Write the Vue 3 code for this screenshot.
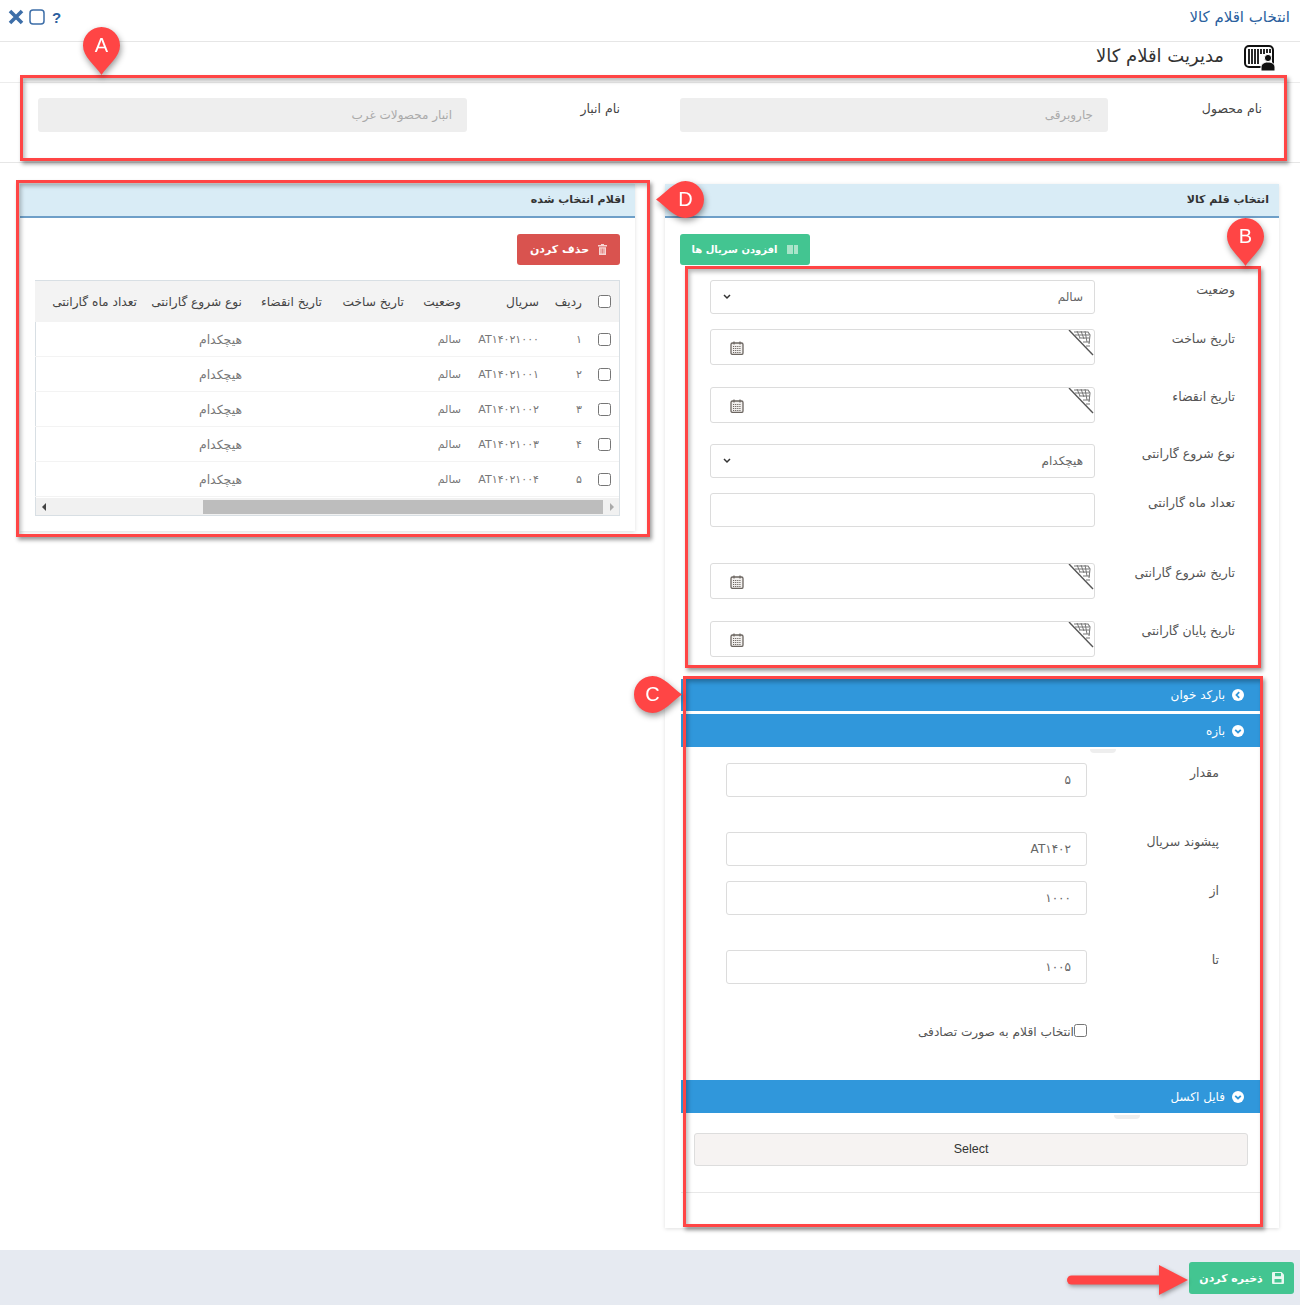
<template>
  <div class="page" dir="rtl">
    <header class="topbar">
      <span class="topbar-title">انتخاب اقلام کالا</span>
      <div class="window-tools" dir="ltr">
        <svg width="16" height="16" viewBox="0 0 16 16"><path d="M2 2l12 12M14 2L2 14" stroke="#3d6ea8" stroke-width="3.6" fill="none"/></svg>
        <svg width="16" height="16" viewBox="0 0 16 16"><rect x="1" y="1" width="14" height="14" rx="3" fill="none" stroke="#3d6ea8" stroke-width="1.5"/></svg>
        <span class="help">?</span>
      </div>
    </header>

    <div class="subbar">
      <svg class="barcode-user" width="32" height="26" viewBox="0 0 32 26">
        <rect x="1" y="1" width="28" height="21" rx="4" fill="none" stroke="#111" stroke-width="2"/>
        <path d="M5 4v15M8 4v15M11 4v15M14 4v15M17 4v5M20 4v5M23 4v4M26 4v4" stroke="#111" stroke-width="1.8"/>
        <circle cx="24" cy="13" r="3.6" fill="#111" stroke="#fff" stroke-width="1"/>
        <path d="M17 26v-4c0-3 3-5 7-5s7 2 7 5v4z" fill="#111" stroke="#fff" stroke-width="1"/>
      </svg>
      <span class="subbar-title">مدیریت اقلام کالا</span>
    </div>

    <section class="info">
      <div v-for="item in infoFields" :key="item.label" class="info-field">
        <label class="info-label">{{ item.label }}</label>
        <input class="info-input" :value="item.value" disabled />
      </div>
    </section>

    <main class="main">
      <section class="panel panel-form">
        <h3 class="panel-head">انتخاب قلم کالا</h3>
        <div class="panel-tools">
          <button class="btn btn-green btn-add">
            <svg width="12" height="9" viewBox="0 0 12 9"><path d="M1 0v9M3 0v9M5 0v9M8 0v9M10 0v9" stroke="#cdeedd" stroke-width="1.5"/></svg>
            افزودن سریال ها
          </button>
        </div>

        <div class="form">
          <div v-for="row in formRows" :key="row.label" class="form-row" :class="'row-' + row.type">
            <label class="form-label">{{ row.label }}</label>
            <div v-if="row.type === 'select'" class="control select">
              <span>{{ row.value }}</span>
              <svg width="8" height="6" viewBox="0 0 8 6"><path d="M1 1l3 3 3-3" fill="none" stroke="#333" stroke-width="1.5"/></svg>
            </div>
            <div v-else-if="row.type === 'date'" class="control date">
              <svg class="date-corner" width="26" height="26" viewBox="0 0 26 26">
                <path d="M1 0h22q2 0 2 2v23z" fill="#fff" stroke="none"/>
                <path d="M1 0L25 25" stroke="#555" stroke-width="1.4"/>
                <path d="M6 2h14l2 3-1 9M7 5h14M11 8h10M15 12h7M18 16h4" fill="none" stroke="#777" stroke-width="1.1"/>
                <path d="M9 1l3 7M13 1l3 8M17 1l2 11" fill="none" stroke="#777" stroke-width="1"/>
              </svg>
              <svg class="date-icon" width="14" height="14" viewBox="0 0 14 14">
                <rect x="1" y="2" width="12" height="11.4" rx="1.5" fill="#f2f0ee" stroke="#6b6560" stroke-width="1.3"/>
                <path d="M4 .5v3M10 .5v3" stroke="#6b6560" stroke-width="1.2"/>
                <path d="M3 5.500h8M3 7.500h8M3 9.500h8M3 11.500h8" stroke="#6b6560" stroke-width="1" stroke-dasharray="1.2 .9"/>
              </svg>
            </div>
            <div v-else class="control"></div>
          </div>
        </div>

        <div class="accordion">
          <div class="acc-head acc-first">
            <svg width="12" height="12" viewBox="0 0 12 12"><circle cx="6" cy="6" r="6" fill="#fff"/><path d="M7.200 3.200L4.500 6l2.700 2.800" fill="none" stroke="#3097db" stroke-width="1.800"/></svg>
            بارکد خوان
          </div>
          <div class="acc-head">
            <svg width="12" height="12" viewBox="0 0 12 12"><circle cx="6" cy="6" r="6" fill="#fff"/><path d="M3.200 4.800L6 7.500l2.800-2.700" fill="none" stroke="#3097db" stroke-width="1.800"/></svg>
            بازه
            <i class="smudge smudge-range"></i>
          </div>
          <div class="acc-body">
            <div v-for="row in rangeRows" :key="row.label" class="acc-row" :class="{ 'acc-row-tall': row.tall }">
              <label class="form-label acc-label">{{ row.label }}</label>
              <div class="control acc-control">{{ row.value }}</div>
            </div>
            <label class="random">
              <input type="checkbox" />
              <span>انتخاب اقلام به صورت تصادفی</span>
            </label>
          </div>
          <div class="acc-head">
            <svg width="12" height="12" viewBox="0 0 12 12"><circle cx="6" cy="6" r="6" fill="#fff"/><path d="M3.200 4.800L6 7.500l2.800-2.700" fill="none" stroke="#3097db" stroke-width="1.800"/></svg>
            فایل اکسل
            <i class="smudge smudge-file"></i>
          </div>
          <div class="acc-file">
            <button class="file-select">Select</button>
          </div>
        </div>
      </section>

      <section class="panel panel-list">
        <h3 class="panel-head">اقلام انتخاب شده</h3>
        <div class="panel-tools">
          <button class="btn btn-red">
            <svg width="9" height="11" viewBox="0 0 9 11"><path d="M3 0h3v1h3v1.500H0V1h3zM1 3.200h7V11H1z" fill="#f6d5d3"/><path d="M3 4.500v5M4.500 4.500v5M6 4.500v5" stroke="#d9534f" stroke-width=".6"/></svg>
            حذف کردن
          </button>
        </div>
        <div class="grid-wrap">
          <table class="grid">
            <colgroup>
              <col v-for="w in colWidths" :key="w" :style="{ width: w + 'px' }" />
            </colgroup>
            <thead>
              <tr>
                <th class="cell-check"><input type="checkbox" /></th>
                <th v-for="col in columns" :key="col">{{ col }}</th>
              </tr>
            </thead>
            <tbody>
              <tr v-for="row in items" :key="row.no">
                <td class="cell-check"><input type="checkbox" /></td>
                <td>{{ row.no }}</td>
                <td>{{ row.serial }}</td>
                <td>سالم</td>
                <td></td>
                <td></td>
                <td class="cell-wide">هیچکدام</td>
                <td></td>
              </tr>
            </tbody>
          </table>
          <div class="hscroll" dir="ltr">
            <i class="arrow arrow-left"></i>
            <div class="hscroll-track"><div class="hscroll-thumb"></div></div>
            <i class="arrow arrow-right"></i>
          </div>
        </div>
      </section>
    </main>

    <footer class="footer">
      <button class="btn btn-green btn-save">
        <svg width="12" height="12" viewBox="0 0 12 12"><path d="M0 1q0-1 1-1h8.500L12 2.500V11q0 1-1 1H1q-1 0-1-1z" fill="#e8f8f1"/><rect x="3" y="1" width="6" height="3.200" fill="#43c591"/><rect x="2.500" y="7" width="7" height="3.500" fill="#43c591"/></svg>
        ذخیره کردن
      </button>
    </footer>

    <!-- annotations laid over the screenshot -->
    <div class="mark mark-a"></div>
    <div class="mark mark-b"></div>
    <div class="mark mark-c"></div>
    <div class="mark mark-d"></div>

    <div class="pin pin-a">
      <svg width="37" height="48" viewBox="0 0 37 48"><path :d="pinPath" fill="#ff4545"/></svg>
      <span>A</span>
    </div>
    <div class="pin pin-b">
      <svg width="37" height="48" viewBox="0 0 37 48"><path :d="pinPath" fill="#ff4545"/></svg>
      <span>B</span>
    </div>
    <div class="pin pin-c">
      <svg width="48" height="37" viewBox="0 0 48 37"><path :d="pinPath" transform="translate(0 37) rotate(-90)" fill="#ff4545"/></svg>
      <span>C</span>
    </div>
    <div class="pin pin-d">
      <svg width="48" height="37" viewBox="0 0 48 37"><path :d="pinPath" transform="translate(48 0) rotate(90)" fill="#ff4545"/></svg>
      <span>D</span>
    </div>

    <svg class="save-arrow" width="122" height="32" viewBox="0 0 122 32">
      <path d="M4.500 15h92" stroke="#ff4545" stroke-width="9" stroke-linecap="round"/>
      <path d="M92 0l29 15-29 15z" fill="#ff4545"/>
    </svg>
  </div>
</template>

<script setup>
  const pinPath = 'M18.5 0C28.7 0 37 8.300 37 18.500 37 30 25 38 18.500 48 12 38 0 30 0 18.500 0 8.300 8.300 0 18.500 0Z';

  const infoFields = [
    { label: 'نام محصول', value: 'جاروبرقی' },
    { label: 'نام انبار', value: 'انبار محصولات غرب' }
  ];

  const formRows = [
    { label: 'وضعیت', type: 'select', value: 'سالم' },
    { label: 'تاریخ ساخت', type: 'date' },
    { label: 'تاریخ انقضاء', type: 'date' },
    { label: 'نوع شروع گارانتی', type: 'select', value: 'هیچکدام' },
    { label: 'تعداد ماه گارانتی', type: 'text' },
    { label: 'تاریخ شروع گارانتی', type: 'date' },
    { label: 'تاریخ پایان گارانتی', type: 'date' }
  ];

  const rangeRows = [
    { label: 'مقدار', value: '۵', tall: true },
    { label: 'پیشوند سریال', value: 'AT۱۴۰۲' },
    { label: 'از', value: '۱۰۰۰', tall: true },
    { label: 'تا', value: '۱۰۰۵', tall: true }
  ];

  const colWidths = [29, 43, 78, 57, 82, 80, 105, 110];
  const columns = ['ردیف', 'سریال', 'وضعیت', 'تاریخ ساخت', 'تاریخ انقضاء', 'نوع شروع گارانتی', 'تعداد ماه گارانتی'];

  const items = [
    { no: '۱', serial: 'AT۱۴۰۲۱۰۰۰' },
    { no: '۲', serial: 'AT۱۴۰۲۱۰۰۱' },
    { no: '۳', serial: 'AT۱۴۰۲۱۰۰۲' },
    { no: '۴', serial: 'AT۱۴۰۲۱۰۰۳' },
    { no: '۵', serial: 'AT۱۴۰۲۱۰۰۴' }
  ];
</script>

<style>
body {
  margin: 0;
  background: #fff;
}
</style>

<style scoped>
.page {
  position: relative;
  width: 1300px;
  height: 1308px;
  overflow: hidden;
  font-family: "DejaVu Sans", "Noto Sans", sans-serif;
  font-size: 11px;
  color: #555;
  background: #fff;
}

.topbar {
  display: flex;
  align-items: center;
  justify-content: space-between;
  height: 42px;
  padding: 0 10px 7px 8px;
  box-sizing: border-box;
  border-bottom: 1px solid #e6e6e6;
}

.topbar-title {
  font-size: 15px;
  color: #2b5f9e;
}

.window-tools {
  display: flex;
  align-items: center;
  gap: 5px;
}

.help {
  margin-left: 2px;
  font: bold 15px "Liberation Sans", sans-serif;
  color: #2b5f9e;
}

.subbar {
  display: flex;
  align-items: flex-start;
  gap: 20px;
  height: 41px;
  padding: 3px 24px 0 0;
  box-sizing: border-box;
  border-bottom: 1px solid #ececec;
}

.subbar-title {
  margin-top: -1px;
  line-height: 24px;
  font-size: 18px;
  color: #333;
}

.info {
  display: flex;
  height: 80px;
  padding: 15px 38px 0 0;
  box-sizing: border-box;
  gap: 60px;
  border-bottom: 1px solid #e6e6e6;
}

.info-field {
  display: flex;
  align-items: flex-start;
}

.info-label {
  width: 154px;
  padding-top: 3px;
  font-size: 12.5px;
  color: #444;
}

.info-input {
  width: 428px;
  height: 34px;
  padding: 0 15px;
  box-sizing: border-box;
  border: 0;
  border-radius: 3px;
  background: #eee;
  font: inherit;
  font-size: 12px;
  color: #aaa;
}

.info-field:last-child .info-label {
  width: 153px;
}

.info-field:last-child .info-input {
  width: 429px;
}

.main {
  display: flex;
  align-items: flex-start;
  gap: 30px;
  padding: 21px 21px 22px 20px;
}

.panel {
  width: 614px;
  box-sizing: border-box;
  background: #fff;
  box-shadow: 0 1px 4px rgba(0, 0, 0, 0.13);
}

.panel-head {
  height: 34px;
  margin: 0;
  padding: 0 10px;
  box-sizing: border-box;
  line-height: 32px;
  font-size: 11px;
  font-weight: bold;
  color: #333;
  background: #d9ecf6;
  border-bottom: 2px solid #6e9fc8;
}

.panel-tools {
  display: flex;
  padding: 16px 15px 15px;
  justify-content: flex-end;
}

.panel-list .panel-tools {
  justify-content: flex-start;
}

.btn {
  display: inline-flex;
  align-items: center;
  justify-content: center;
  gap: 9px;
  height: 31px;
  padding: 0;
  border: 0;
  border-radius: 3px;
  font: inherit;
  font-size: 11px;
  font-weight: bold;
  color: #fff;
}

.btn-green {
  background: #43c591;
}

.btn-add {
  width: 130px;
  font-size: 10px;
}

.btn-red {
  width: 103px;
  background: #d9534f;
}

.form-row,
.acc-row {
  display: flex;
  align-items: flex-start;
}

.form-row {
  padding-right: 44px;
}

.row-select {
  margin-bottom: 15px;
}

.row-date {
  margin-bottom: 22px;
}

.row-date:nth-child(3) {
  margin-bottom: 21px;
}

.row-text {
  margin-bottom: 36px;
}

.form-label {
  width: 140px;
  padding-top: 2px;
  font-size: 12.5px;
  color: #555;
}

.control {
  position: relative;
  display: flex;
  align-items: center;
  justify-content: space-between;
  width: 385px;
  height: 34px;
  padding: 0 11px 0 12px;
  box-sizing: border-box;
  border: 1px solid #dcdcdc;
  border-radius: 3px;
  background: #fff;
  font-size: 12px;
  color: #666;
}

.date {
  height: 36px;
}

.date-corner {
  position: absolute;
  top: 0;
  right: 0;
}

.date-icon {
  position: absolute;
  left: 19px;
  top: 11px;
}

.accordion {
  margin: 22px 19px 0 16px;
  padding-bottom: 35px;
}

.acc-head {
  position: relative;
  display: flex;
  align-items: center;
  gap: 7px;
  height: 33px;
  padding: 0 16px;
  box-sizing: border-box;
  font-size: 12px;
  color: #fff;
  background: #3097db;
}

.acc-first {
  height: 32px;
  margin-bottom: 3px;
}

.smudge {
  position: absolute;
  top: 35px;
  width: 26px;
  height: 4px;
  border-radius: 0 0 13px 13px;
  background: #eee;
}

.smudge-range {
  left: 409px;
}

.smudge-file {
  left: 433px;
}

.acc-body {
  height: 333px;
  padding-top: 16px;
  box-sizing: border-box;
}

.acc-row {
  padding-right: 41px;
  margin-bottom: 15px;
}

.acc-row-tall {
  margin-bottom: 35px;
}

.acc-label {
  width: 132px;
}

.acc-control {
  width: 361px;
  padding: 0 15px;
}

.random {
  display: flex;
  align-items: flex-start;
  margin: 40px 173px 0 0;
  font-size: 12.2px;
  color: #555;
}

.random input {
  width: 13px;
  height: 13px;
  margin: 0;
}

.random span {
  padding-top: 1px;
}

.acc-file {
  padding: 20px 0 0 12px;
  height: 80px;
  box-sizing: border-box;
  border-bottom: 1px solid #e8e8e8;
}

.file-select {
  display: block;
  width: 554px;
  height: 33px;
  margin-right: 12px;
  padding-bottom: 3px;
  border: 1px solid #ddd;
  border-radius: 3px;
  background: #f6f3f2;
  font: 12.5px "Liberation Sans", sans-serif;
  color: #333;
}

.panel-list {
  width: 615px;
  height: 347px;
}

.grid-wrap {
  width: 585px;
  margin: 0 15px;
  box-sizing: border-box;
  border: 1px solid #d8dfe4;
}

.grid {
  width: 583px;
  table-layout: fixed;
  border-collapse: collapse;
}

.grid th,
.grid td {
  padding: 0 8px 0 0;
  text-align: right;
  white-space: nowrap;
  overflow: hidden;
  font-size: 11px;
}

.grid th {
  height: 41px;
  font-size: 12.2px;
  font-weight: normal;
  color: #444;
  background: #f3f3f3;
  box-shadow: 0 1px 0 #f3f3f3;
}

.grid td {
  height: 34px;
  color: #777;
  border-bottom: 1px solid #f3f3f3;
}

.grid .cell-wide {
  font-size: 12.5px;
}

.grid .cell-check {
  padding: 0 8px 0 0;
}

.cell-check input {
  display: block;
  width: 13px;
  height: 13px;
  margin: 0;
}

.hscroll {
  display: flex;
  align-items: center;
  height: 17px;
  margin-top: 1px;
  background: #f1f1f1;
}

.arrow {
  flex: none;
  width: 0;
  height: 0;
  border-top: 4px solid transparent;
  border-bottom: 4px solid transparent;
}

.arrow-left {
  margin: 0 5px 0 6px;
  border-right: 4px solid #444;
}

.arrow-right {
  margin: 0 5px 0 7px;
  border-left: 4px solid #aaa;
}

.hscroll-track {
  flex: 1;
  display: flex;
  justify-content: flex-end;
}

.hscroll-thumb {
  width: 400px;
  height: 14px;
  background: #bdbdbd;
}

.footer {
  display: flex;
  justify-content: flex-end;
  height: 55px;
  padding: 12px 6px 0 0;
  box-sizing: border-box;
  background: #e6eaf1;
  direction: ltr;
}

.btn-save {
  direction: rtl;
  width: 105px;
  height: 32px;
}

.mark {
  position: absolute;
  box-sizing: border-box;
  border: 3px solid #ff4545;
  box-shadow: 2px 3px 4px rgba(0, 0, 0, 0.4), inset 2px 3px 4px rgba(0, 0, 0, 0.28);
  pointer-events: none;
}

.mark-a {
  left: 20px;
  top: 75px;
  width: 1267px;
  height: 86px;
}

.mark-b {
  left: 685px;
  top: 266px;
  width: 576px;
  height: 402px;
}

.mark-c {
  left: 683px;
  top: 676px;
  width: 580px;
  height: 551px;
}

.mark-d {
  left: 16px;
  top: 180px;
  width: 634px;
  height: 357px;
}

.pin {
  position: absolute;
  filter: drop-shadow(1px 3px 3px rgba(0, 0, 0, 0.4));
}

.pin svg {
  display: block;
}

.pin span {
  position: absolute;
  font: 20px "Liberation Sans", sans-serif;
  color: #fff;
  text-align: center;
}

.pin-a,
.pin-b {
  width: 37px;
  height: 48px;
}

.pin-a span,
.pin-b span {
  left: 0;
  right: 0;
  top: 7px;
}

.pin-c,
.pin-d {
  width: 48px;
  height: 37px;
}

.pin-c span {
  left: 0;
  width: 37px;
  top: 7px;
}

.pin-d span {
  right: 0;
  width: 37px;
  top: 7px;
}

.pin-a {
  left: 83px;
  top: 27px;
}

.pin-b {
  left: 1227px;
  top: 218px;
}

.pin-c {
  left: 634px;
  top: 676px;
}

.pin-d {
  left: 656px;
  top: 181px;
}

.save-arrow {
  position: absolute;
  left: 1067px;
  top: 1265px;
  filter: drop-shadow(1px 2px 2px rgba(0, 0, 0, 0.35));
}
</style>
